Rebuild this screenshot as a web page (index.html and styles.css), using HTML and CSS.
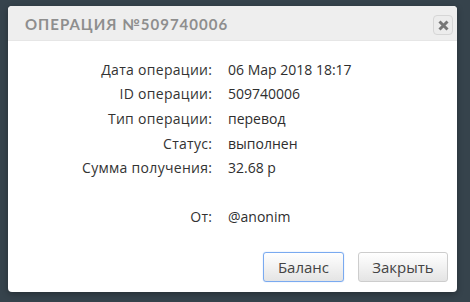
FILE: index.html
```html
<!DOCTYPE html>
<html>
<head>
<meta charset="utf-8">
<link rel="stylesheet" href="styles.css">
</head>
<body>
<div class="dialog">
  <div class="header">
    <span class="title">Операция №509740006</span>
    <button class="close" aria-label="close">
      <svg width="11" height="11" viewBox="0 0 11 11"><path d="M1.5 1.5 L9.5 9.5 M9.5 1.5 L1.5 9.5" stroke="#777" stroke-width="3" stroke-linecap="butt"/></svg>
    </button>
  </div>
  <div class="content">
    <div class="info">
      <span class="label">Дата операции:</span><span class="value">06 Мар 2018 18:17</span>
      <span class="label">ID операции:</span><span class="value">509740006</span>
      <span class="label">Тип операции:</span><span class="value">перевод</span>
      <span class="label">Статус:</span><span class="value">выполнен</span>
      <span class="label">Сумма получения:</span><span class="value">32.68 р</span>
      <span class="label empty"></span><span class="value empty"></span>
      <span class="label">От:</span><span class="value">@anonim</span>
    </div>
  </div>
  <div class="footer">
    <button class="btn focus">Баланс</button>
    <button class="btn">Закрыть</button>
  </div>
</div>
</body>
</html>
```

FILE: styles.css
```css
html, body {
  margin: 0;
  padding: 0;
  background: #36434c;
  height: 100%;
}
body {
  padding: 6px 0 0 8px;
  box-sizing: border-box;
}
.dialog {
  width: 449px;
  height: 286px;
  background: #fff;
  border-radius: 4px;
  overflow: hidden;
  display: flex;
  flex-direction: column;
  box-shadow: 0 2px 6px rgba(0,0,0,0.3);
}
.header {
  height: 35px;
  background: #eeeeee;
  display: flex;
  align-items: center;
  justify-content: space-between;
  padding: 0 4px 0 17px;
  border-bottom: 1px solid #e6e6e6;
  box-sizing: border-box;
}
.title {
  font-family: "Lato", sans-serif;
  font-weight: 700;
  font-size: 15px;
  letter-spacing: 1px;
  text-transform: uppercase;
  color: #8e8e8e;
  padding-top: 2px;
}
.close {
  width: 20px;
  height: 20px;
  margin-top: 4px;
  padding: 0;
  border: 1px solid #d6d6d6;
  border-radius: 4px;
  background: #ececec;
  display: flex;
  align-items: center;
  justify-content: center;
}
.content {
  flex: 1;
  padding-top: 16px;
}
.info {
  display: grid;
  grid-template-columns: 204px 1fr;
  column-gap: 16px;
  grid-auto-rows: 24.6px;
  align-items: center;
  font-family: "Open Sans", sans-serif;
  font-size: 14px;
  color: #333;
}
.label {
  text-align: right;
  letter-spacing: 0.3px;
  margin-right: -0.3px;
}
.value {
  color: #2e2e2e;
}
.footer {
  display: flex;
  justify-content: flex-end;
  gap: 14px;
  padding: 0 9px 10px 0;
}
.btn {
  height: 30px;
  font-family: "Open Sans", sans-serif;
  font-size: 15px;
  color: #444;
  background: linear-gradient(#ffffff, #e4e4e4);
  border: 1px solid #cdcdcd;
  border-radius: 3px;
  padding: 0 10px;
}
.btn.focus {
  width: 81px;
  border-color: #7aaaf0;
  box-shadow: 0 0 1px #8ab4f0;
}
.btn:last-child {
  width: 90px;
}
```
